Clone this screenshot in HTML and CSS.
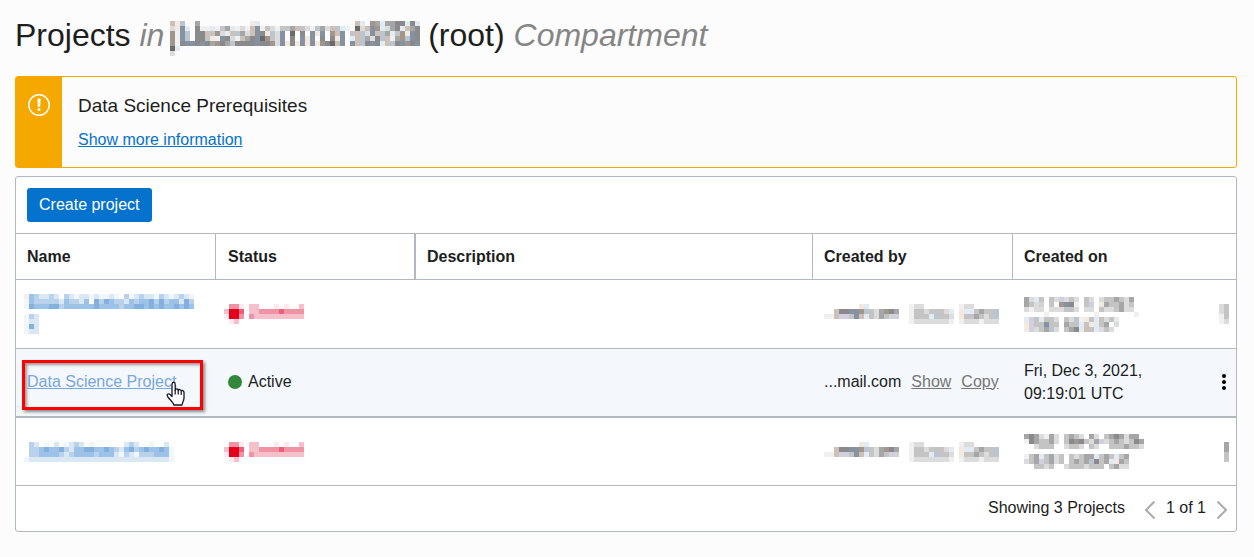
FILE: index.html
```html
<!DOCTYPE html>
<html lang="en">
<head>
<meta charset="utf-8">
<title>Projects</title>
<link rel="stylesheet" href="styles.css">
</head>
<body>
<main class="page">
  <h1 class="heading">Projects <em>in</em> <svg class="mosaic heading-mosaic" data-mosaic="tenant"></svg> (root) <em>Compartment</em></h1>

  <section class="alert">
    <div class="alert-mark">
      <svg width="24" height="24" viewBox="0 0 24 24" fill="none" aria-hidden="true"><circle cx="12" cy="12" r="10.2" stroke="#fff" stroke-width="1.5"/><path d="M10.4 5.5h3.2l-.4 8.5h-2.4zM10.7 15.2h2.6v2.6h-2.6z" fill="#fff"/></svg>
    </div>
    <div class="alert-body">
      <h2 class="alert-title">Data Science Prerequisites</h2>
      <a class="link" href="#">Show more information</a>
    </div>
  </section>

  <section class="card">
    <div class="toolbar"><button class="primary" type="button">Create project</button></div>
    <table class="projects">
      <colgroup><col class="col-mid"><col class="col-mid"><col><col class="col-mid"><col class="col-date"><col class="col-menu"></colgroup>
      <thead>
        <tr><th>Name</th><th class="thick">Status</th><th>Description</th><th>Created by</th><th colspan="2">Created on</th></tr>
      </thead>
      <tbody>
        <tr>
          <td class="redacted"><svg class="mosaic" data-mosaic="nameA"></svg></td>
          <td class="redacted"><svg class="mosaic" data-mosaic="status"></svg></td>
          <td></td>
          <td><svg class="mosaic" data-mosaic="owner"></svg></td>
          <td><svg class="mosaic" data-mosaic="dateA"></svg></td>
          <td class="menu-cell"><svg class="mosaic" data-mosaic="menuA"></svg></td>
        </tr>
        <tr class="hovered">
          <td class="marked"><a class="link visited" href="#">Data Science Project</a>
            <span class="marker"></span>
            <svg class="pointer" width="20" height="26" viewBox="0 0 20 26" aria-hidden="true"><path d="M6 15.5V3.2C6 .6 9.2.6 9.2 3.2V9.3C9.5 7.4 12 7.600 12.200 9.500C12.600 8 15 8.200 15.200 10.200C15.800 9 18 9.400 18 11.500V17C18 20 16.300 21 16 24H7.800C7.500 21.500 3.500 18.500 1.500 15.300C.3 13 3 12 4.300 13.700Z" fill="#fff" stroke="#14142a" stroke-width="1.300" stroke-linejoin="round"/><path d="M9.200 9v4.500M12.200 9.500v4M15.200 10.500v3.500" stroke="#14142a" stroke-width="1.200"/></svg>
          </td>
          <td><span class="status"><span class="dot"></span>Active</span></td>
          <td></td>
          <td><span class="owner"><span>...mail.com</span><a class="link muted" href="#">Show</a><a class="link muted" href="#">Copy</a></span></td>
          <td>Fri, Dec 3, 2021, 09:19:01 UTC</td>
          <td class="menu-cell"><button class="icon-button" type="button" aria-label="Actions"><svg width="6" height="18" viewBox="0 0 6 18"><circle cx="3" cy="3" r="2"/><circle cx="3" cy="9" r="2"/><circle cx="3" cy="15" r="2"/></svg></button></td>
        </tr>
        <tr class="last">
          <td class="redacted"><svg class="mosaic" data-mosaic="nameB"></svg></td>
          <td class="redacted"><svg class="mosaic" data-mosaic="status"></svg></td>
          <td></td>
          <td><svg class="mosaic" data-mosaic="owner"></svg></td>
          <td><svg class="mosaic" data-mosaic="dateB"></svg></td>
          <td class="menu-cell"><svg class="mosaic" data-mosaic="menuB"></svg></td>
        </tr>
      </tbody>
    </table>
    <div class="pager">
      <span class="count">Showing 3 Projects</span>
      <button class="icon-button" type="button" aria-label="Previous page"><svg class="chevron" width="12" height="20" viewBox="0 0 12 20"><path d="M10.500 1.500 2 10l8.500 8.500"/></svg></button>
      <span>1 of 1</span>
      <button class="icon-button" type="button" aria-label="Next page"><svg class="chevron" width="12" height="20" viewBox="0 0 12 20"><path d="M1.500 1.500 10 10l-8.500 8.500"/></svg></button>
    </div>
  </section>
</main>
<script src="mosaic.js"></script>
</body>
</html>
```
FILE: styles.css
```css
* { box-sizing: border-box; }
body {
  margin: 0;
  background: #fcfcfc;
  color: #201e1c;
  font: 16px/23px "Liberation Sans", Arial, sans-serif;
}
.page { padding: 15px 17px 25px 15px; }
.heading {
  margin: 0 0 21px;
  font-size: 32px;
  line-height: 40px;
  font-weight: 400;
}
.heading em { color: #858585; }
.mosaic { display: block; shape-rendering: crispEdges; }
.heading-mosaic {
  display: inline-block;
  vertical-align: top;
  margin: 6px -1px -6px -3px;
}

.alert {
  display: flex;
  margin-bottom: 8px;
  border: 1px solid #f5a800;
  border-radius: 3px;
}
.alert-mark {
  flex: none;
  width: 46px;
  padding: 16px 0 0 11px;
  background: #f5a800;
}
.alert-mark svg { display: block; }
.alert-body { padding: 17px 16px 15px; }
.alert-title {
  margin: 0 0 10px;
  font-size: 19px;
  line-height: 24px;
  font-weight: 400;
}
.link {
  display: inline-block;
  color: #0572ce;
  line-height: 24px;
  text-decoration: underline;
}
.alert .link { display: block; }
.link.visited { color: #78a7e0; }
.link.muted { color: #757575; }

.card {
  border: 1px solid #b1b8c2;
  border-radius: 3px;
  background: #fff;
}
.toolbar { padding: 11px; }
.primary {
  display: block;
  height: 34px;
  padding: 0 12px 2px;
  border: 0;
  border-radius: 3px;
  background: #0572ce;
  color: #fff;
  font: inherit;
}
.projects {
  width: 100%;
  table-layout: fixed;
  border-collapse: separate;
  border-spacing: 0;
}
.col-mid { width: 200px; }
.col-date { width: 180px; }
.col-menu { width: 43px; }
.projects th {
  height: 47px;
  padding: 0 11px;
  border: solid #b1b8c2;
  border-width: 1px 1px 1px 0;
  text-align: left;
}
.projects th:last-child { border-right: 0; }
.projects th.thick { border-right-width: 2px; }
.projects td {
  height: 69px;
  padding: 0 11px;
  border-bottom: 1px solid #b1b8c2;
}
.projects .last td { height: 68px; }
.projects th:nth-child(2), .projects td:nth-child(2) { padding-left: 12px; }
.projects td.redacted { padding-left: 8px; }
.projects .menu-cell { padding: 0 7px 0 0; }
.menu-cell .mosaic, .menu-cell .icon-button { margin-left: auto; }
.projects .hovered td {
  padding-bottom: 2px;
  border-bottom-width: 2px;
  background: #f4f8fd;
}
.status, .owner { display: flex; align-items: center; }
.status { gap: 6px; }
.owner { gap: 10px; }
.dot { width: 14px; height: 14px; border-radius: 50%; background: #32873a; }
.icon-button {
  display: block;
  padding: 0;
  border: 0;
  background: none;
}
.icon-button svg { display: block; }
.menu-cell .icon-button { padding: 0 2px; }

.marked { position: relative; }
.marker {
  position: absolute;
  top: 11px;
  left: 6px;
  width: 181px;
  height: 50px;
  border: 3px solid #f00;
  box-shadow: 2px 2px 3px #888, inset 2px 2px 3px #999;
}
.pointer { position: absolute; top: 32px; left: 150px; }

.pager {
  display: flex;
  align-items: center;
  justify-content: flex-end;
  gap: 10px;
  height: 45px;
  padding: 0 8px 2px;
}
.count { margin-right: 9px; }
.pager .icon-button { padding-top: 5px; }
.chevron { fill: none; stroke: #aaa; stroke-width: 2; }
```
FILE: mosaic.js
```
// Draws redacted fields as grids of 5px colour blocks, one letter per block.
const palette = {
  a: "#f0f0f0", b: "#dcdcdc", c: "#c4c4c4", d: "#a6a6a6", e: "#8a8a8c", f: "#6a6a6a",
  B: "#e0ebf3", C: "#b9c6d2", D: "#8492a2", R: "#f3e9df", S: "#cfc0b5", T: "#a1968c", V: "#d0d0de",
  1: "#f0f6fb", 2: "#dae8f5", 3: "#b9d2ec", 4: "#9cc2e7", 5: "#82b0df",
  6: "#fdeaee", 7: "#f6c0cb", 8: "#f093a4", 9: "#e6001c", 0: "#ee6078"
};
const mosaics = {
  tenant: [
    "SRC..d..........RB...................SB.TdBddeeBeB",
    "bRDB.eaaBacdBabaSDacbaccdScbaCdbSCBa.fbSDTBbdeBSde",
    "TaDC.eeScTbBSCdbSDeRCbD.f.e.DRD.TSD.cSCbDSCdBcTRDe",
    "TaDC.eecRaDebaSdeDfTcbD.e.DRD.e.eRD.BSCdbeCSadTCDe",
    "TaeDDeDedTedceeeeDeeTbDReRDRDRTefSD.DSCeDeBSCeDTeD",
    "fB", "b"
  ],
  nameA: [
    "6432232.32122121121.31232213212321",
    "1433333243324.53543324344535344253",
    "1544455344444454444344554545445454",
    "", "132", "122", "152", "122"
  ],
  nameB: [
    ".32.1.2.1232.1......232..1..2.",
    ".33454453244554454324534544541",
    ".33444432344443444213213334441",
    "122222222222222222222222222221"
  ],
  status: [
    ".886.77...6.6..7",
    "7990.77888808888",
    "6998.87777777777",
    ".67............."
  ],
  owner: [
    ".......RB........abb.......abb.....",
    "..SeeDDTCcbdTed..accbcccbB.RBBcdccC",
    "aaSVVcDSBcbdcVV..acccBCccb.RccdcbcC",
    ".................abbbbbbba.abbbabbb"
  ],
  dateA: [
    "dbBc.cbVbcb.cb.bccdcbd.",
    "dcbV.c.TDea.cV.Rdccdbc.",
    "babb.bbbccb.bb.cbbcdbb.",
    "....a.........a.......a",
    "BVcBccb.cbCaRcBcbcB",
    "RVccDcc.dccBcRBcd.b",
    "RVbcdCb.cdeBScBbcb."
  ],
  dateB: [
    "dedbadb.cdcb.db.cdedbdd",
    "aedccdb.ceTecbdVbcdcbced",
    "..bccc..bccb.cb..cccdccb",
    "",
    "acdBcdbc.cbcddBcdcBcd",
    "bcdVcdbc.cdcdCecdBRdc",
    "..ccbc..bcccbccc.cdbb"
  ],
  menuA: ["bc", "bc", "ac", "ab"],
  menuB: [".d", ".d", ".c", ".c"]
};
const cell = 5;
for (const svg of document.querySelectorAll("[data-mosaic]")) {
  const rows = mosaics[svg.dataset.mosaic];
  const columns = Math.max(...rows.map(row => row.length));
  svg.setAttribute("width", columns * cell);
  svg.setAttribute("height", rows.length * cell);
  svg.setAttribute("role", "img");
  svg.setAttribute("aria-label", "Redacted");
  rows.forEach((row, y) => [...row].forEach((key, x) => {
    if (key === ".") return;
    const rect = document.createElementNS("http://www.w3.org/2000/svg", "rect");
    rect.setAttribute("x", x * cell);
    rect.setAttribute("y", y * cell);
    rect.setAttribute("width", cell);
    rect.setAttribute("height", cell);
    rect.setAttribute("fill", palette[key]);
    svg.append(rect);
  }));
}
```
